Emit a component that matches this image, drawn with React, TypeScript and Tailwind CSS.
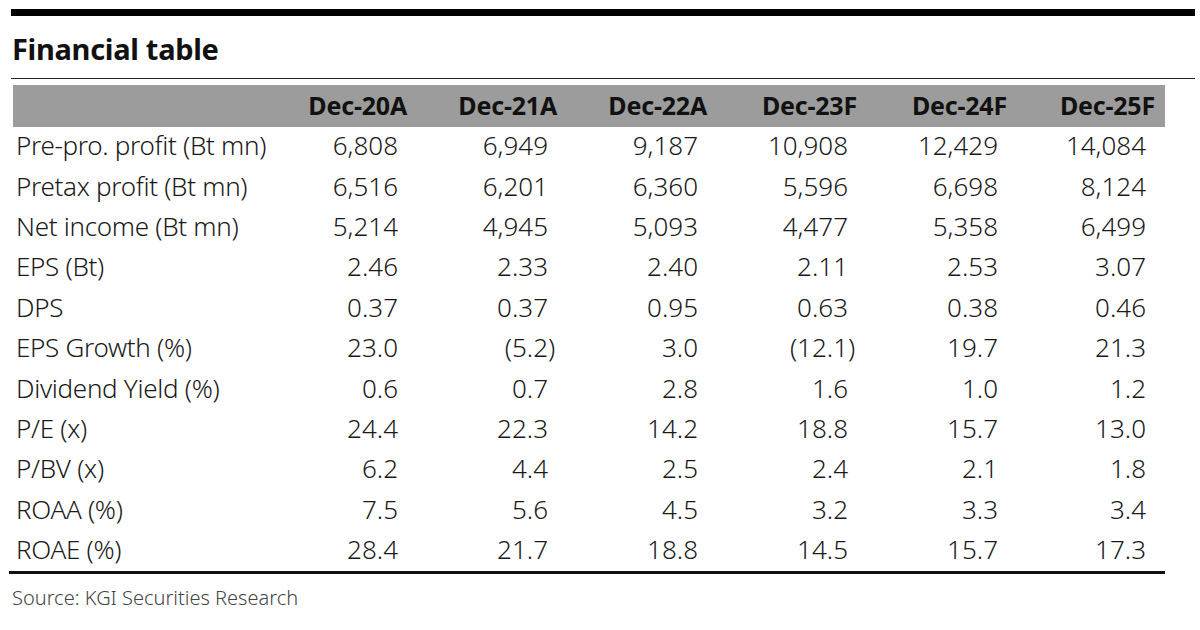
const COLUMNS = [
  { label: "Dec-20A", width: "w-[136px]" },
  { label: "Dec-21A", width: "w-[150px]" },
  { label: "Dec-22A", width: "w-[150px]" },
  { label: "Dec-23F", width: "w-[150px]" },
  { label: "Dec-24F", width: "w-[150px]" },
  { label: "Dec-25F", width: "w-[148px]" },
];

// negative numbers are written as (x) — the closing paren hangs past the column like in Excel
const ROWS: [string, string[]][] = [
  ["Pre-pro. profit (Bt mn)", ["6,808", "6,949", "9,187", "10,908", "12,429", "14,084"]],
  ["Pretax profit (Bt mn)",   ["6,516", "6,201", "6,360", "5,596", "6,698", "8,124"]],
  ["Net income (Bt mn)",      ["5,214", "4,945", "5,093", "4,477", "5,358", "6,499"]],
  ["EPS (Bt)",                ["2.46", "2.33", "2.40", "2.11", "2.53", "3.07"]],
  ["DPS",                     ["0.37", "0.37", "0.95", "0.63", "0.38", "0.46"]],
  ["EPS Growth (%)",          ["23.0", "(5.2)", "3.0", "(12.1)", "19.7", "21.3"]],
  ["Dividend Yield (%)",      ["0.6", "0.7", "2.8", "1.6", "1.0", "1.2"]],
  ["P/E (x)",                 ["24.4", "22.3", "14.2", "18.8", "15.7", "13.0"]],
  ["P/BV (x)",                ["6.2", "4.4", "2.5", "2.4", "2.1", "1.8"]],
  ["ROAA (%)",                ["7.5", "5.6", "4.5", "3.2", "3.3", "3.4"]],
  ["ROAE (%)",                ["28.4", "21.7", "18.8", "14.5", "15.7", "17.3"]],
];

function Value({ text }: { text: string }) {
  const negative = text.startsWith("(");
  const body = negative ? text.slice(0, -1) : text;
  return (
    <span className="flex justify-end">
      <span>{body}</span>
      <span className="w-[9px] text-left">{negative ? ")" : ""}</span>
    </span>
  );
}

export default function App() {
  return (
    <div className="w-[1200px] h-[630px] bg-white font-['Noto_Sans',sans-serif] text-[#1a1a1a] overflow-hidden">
      <div className="pt-[9px] pl-[11px] pr-[5px]">
        {/* ── top rule + title ── */}
        <div className="h-[7px] bg-black" />
        <h1 className="mt-[13px] pl-[1px] h-[40px] leading-[40px] text-[29px] font-bold text-[#111] tracking-[-0.3px]">
          Financial table
        </h1>
        <div className="mt-[9px] h-px bg-[#222]" />

        {/* ── table ── */}
        <div className="mt-[6px] ml-[2px] w-[1152px]">
          <div className="flex items-center h-[42px] bg-[#9c9c9c] text-[25px] font-bold text-[#111] tracking-[-0.2px]">
            <div className="w-[258px]" />
            {COLUMNS.map((c) => (
              <div key={c.label} className={`${c.width} text-right`}>
                {c.label}
              </div>
            ))}
          </div>

          {ROWS.map(([label, values]) => (
            <div key={label} className="flex items-center h-[40.4px] pb-[4px] text-[26px] leading-[36px] font-light">
              <div className="w-[258px] pl-[3px] whitespace-nowrap tracking-[-0.3px]">
                {label}
              </div>
              {values.map((v, i) => (
                <div key={i} className={COLUMNS[i].width}>
                  <Value text={v} />
                </div>
              ))}
            </div>
          ))}
        </div>

        <div className="-ml-[2px] w-[1156px] h-[3px] bg-[#111]" />

        {/* ── source ── */}
        <p className="mt-[12px] pl-[1px] text-[20px] leading-[24px] text-[#444] font-light">
          Source: KGI Securities Research
        </p>
      </div>
    </div>
  );
}
